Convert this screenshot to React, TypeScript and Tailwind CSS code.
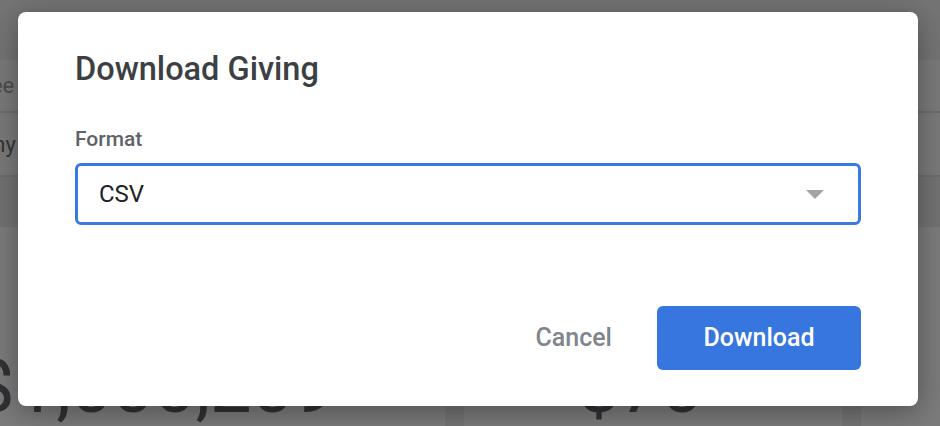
import { useState } from 'react';

function BackgroundPage() {
  return (
    <div className="flex h-full flex-col">
      <div className="h-[60px] shrink-0" />

      {/* Filter rows, mostly hidden behind the dialog */}
      <div className="flex shrink-0 flex-col bg-[#f2f2f2]">
        <div className="flex h-[53px] items-center border-b-2 border-[#d6d6d6] text-[22px] whitespace-nowrap text-[#9a9a9a]">
          <span className="-ml-[21px]">Fee</span>
        </div>
        <div className="flex h-[64px] items-center border-b-2 border-[#d6d6d6] text-[22px] whitespace-nowrap text-[#6a6a6a]">
          <span className="-ml-[21px]">Any</span>
        </div>
      </div>

      <div className="h-[50px] shrink-0 bg-[#e4e4e4]" />

      {/* Summary cards */}
      <div className="flex flex-1 gap-[19px]">
        <div className="flex w-[445px] shrink-0 items-end overflow-hidden bg-[#f7f7f7]">
          <span className="-mb-[4px] -ml-[27px] text-[74px] leading-[86px] whitespace-nowrap text-[#5f6368]">
            $1,000,209
          </span>
        </div>
        <div className="flex w-[378px] shrink-0 items-end overflow-hidden bg-[#f7f7f7]">
          <span className="-mb-[4px] ml-[114px] text-[74px] leading-[86px] whitespace-nowrap text-[#5f6368]">$70</span>
        </div>
        <div className="flex-1 bg-[#f7f7f7]" />
      </div>
    </div>
  );
}

function FormatSelect({ value }: { value: string }) {
  return (
    <button
      type="button"
      className="mt-[12px] flex h-[62px] w-full items-center justify-between rounded-[6px] border-[3px] border-[#3a79e0] bg-white pr-[34px] pl-[21px] text-left"
    >
      <span className="text-[24px] leading-[28px] text-[#202124]">{value}</span>
      <svg width="18" height="9" viewBox="0 0 18 9" aria-hidden="true">
        <path d="M0 0h18L9 9z" fill="#a2a5a8" />
      </svg>
    </button>
  );
}

function DownloadDialog() {
  const [format] = useState('CSV');

  return (
    <div className="absolute inset-0 bg-black/50 pt-[12px] pl-[18px]">
      <div className="flex h-[394px] w-[900px] flex-col rounded-[8px] bg-white px-[57px] pt-[37px] pb-[36px] shadow-[0_6px_28px_rgba(0,0,0,0.35)]">
        <h2 className="text-[32.5px] leading-[40px] font-medium text-[#3c4043]">Download Giving</h2>

        <label className="mt-[38px] text-[21px] leading-[24px] font-medium text-[#5f6368]">Format</label>
        <FormatSelect value={format} />

        <div className="mt-auto flex items-center justify-end gap-[21px]">
          <button type="button" className="h-[64px] px-[24px] text-[25px] font-medium text-[#80868b]">
            Cancel
          </button>
          <button
            type="button"
            className="h-[64px] w-[204px] rounded-[6px] bg-[#3776de] text-[25px] font-medium text-white"
          >
            Download
          </button>
        </div>
      </div>
    </div>
  );
}

export default function App() {
  return (
    <div className="relative h-[426px] w-[940px] overflow-hidden bg-[#e8e8e8] font-[Roboto,sans-serif]">
      <BackgroundPage />
      <DownloadDialog />
    </div>
  );
}
